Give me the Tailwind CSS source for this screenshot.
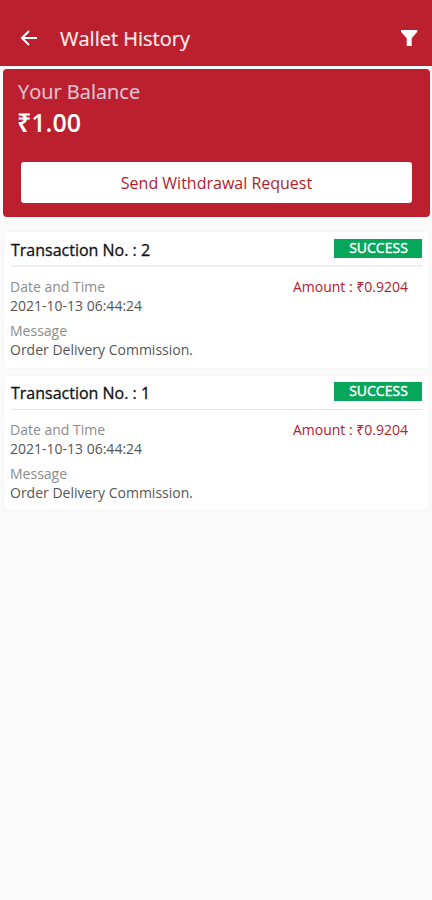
<!DOCTYPE html>
<html lang="en">
<head>
    <meta charset="UTF-8">
    <meta name="viewport" content="width=device-width, initial-scale=1.0">
    <title>Wallet History</title>
    <script src="https://cdn.jsdelivr.net/npm/@tailwindcss/browser@4"></script>
</head>
<body class="bg-[#fafafa] font-['Open_Sans','Noto_Sans',sans-serif]">
    <div class="h-[900px] overflow-hidden">
        <!-- Header -->
        <header class="flex items-center h-[66px] pt-[10px] pl-[20px] pr-[14px] bg-[#bc1f2d] text-white">
            <svg class="w-[18px] h-[18px]" viewBox="0 0 18 18" fill="none" stroke="currentColor" stroke-width="2">
                <path d="M17 9H2.5M9 2L2 9L9 16"/>
            </svg>
            <h1 class="ml-[22px] pt-0.5 text-[20px] leading-6 text-[#fdeeee] [-webkit-text-stroke:0.2px]">Wallet History</h1>
            <svg class="ml-auto w-[18px] h-[18px]" viewBox="0 0 18 18" fill="currentColor">
                <path d="M1 1H17.3V2.8L11.7 9.3V17H6.7V9.3L1 2.8Z"/>
            </svg>
        </header>

        <!-- Balance -->
        <section class="mt-[3px] ml-[3px] mr-[2px] h-[148px] rounded bg-[#bc1f2d] px-[18px] pt-[11px]">
            <p class="-ml-[3px] text-[20px] leading-6 text-[#dcc3d2] [-webkit-text-stroke:0.2px]">Your Balance</p>
            <p class="-ml-1 mt-0.5 text-[25px] leading-8 font-semibold text-white">₹1.00</p>
            <button class="mt-[24px] w-[391px] h-[41px] rounded-[3px] bg-white text-[16px] text-[#b01c2b]">Send Withdrawal Request</button>
        </section>

        <!-- Transactions -->
        <main class="mt-[15px] ml-1 mr-[3px] flex flex-col gap-2">
            <article class="h-[136px] rounded bg-white px-[7px] shadow-[0_0_2px_rgba(0,0,0,0.08)]">
                <div class="flex justify-between h-[35px] pt-[7px] border-b-2 border-[#efefef]">
                    <h2 class="text-[16px] leading-[22px] text-[#111] [-webkit-text-stroke:0.3px]">Transaction No. : 2</h2>
                    <span class="w-[88px] h-[19px] pl-px bg-[#06a75a] text-center text-[14px] leading-[18px] text-white [-webkit-text-stroke:0.4px]">SUCCESS</span>
                </div>
                <div class="flex justify-between pt-[10px] pr-[14px] text-[14px] leading-[19px]">
                    <p class="-ml-px text-[#8c8c8c]">Date and Time</p>
                    <p class="text-[#b5202c]">Amount : ₹0.9204</p>
                </div>
                <p class="-ml-px text-[14px] leading-[19px] text-[#555]">2021-10-13 06:44:24</p>
                <p class="-ml-px mt-[6px] text-[14px] leading-[19px] text-[#8c8c8c]">Message</p>
                <p class="-ml-px text-[14px] leading-[19px] text-[#555]">Order Delivery Commission.</p>
            </article>
            <article class="h-[134px] rounded bg-white px-[7px] shadow-[0_0_2px_rgba(0,0,0,0.08)]">
                <div class="flex justify-between h-[34px] pt-[6px] border-b border-[#e4e4e4]">
                    <h2 class="text-[16px] leading-[22px] text-[#111] [-webkit-text-stroke:0.3px]">Transaction No. : 1</h2>
                    <span class="w-[88px] h-[19px] pl-px bg-[#06a75a] text-center text-[14px] leading-[18px] text-white [-webkit-text-stroke:0.4px]">SUCCESS</span>
                </div>
                <div class="flex justify-between pt-[10px] pr-[14px] text-[14px] leading-[19px]">
                    <p class="-ml-px text-[#8c8c8c]">Date and Time</p>
                    <p class="text-[#b5202c]">Amount : ₹0.9204</p>
                </div>
                <p class="-ml-px text-[14px] leading-[19px] text-[#555]">2021-10-13 06:44:24</p>
                <p class="-ml-px mt-[6px] text-[14px] leading-[19px] text-[#8c8c8c]">Message</p>
                <p class="-ml-px text-[14px] leading-[19px] text-[#555]">Order Delivery Commission.</p>
            </article>
        </main>
    </div>
</body>
</html>
